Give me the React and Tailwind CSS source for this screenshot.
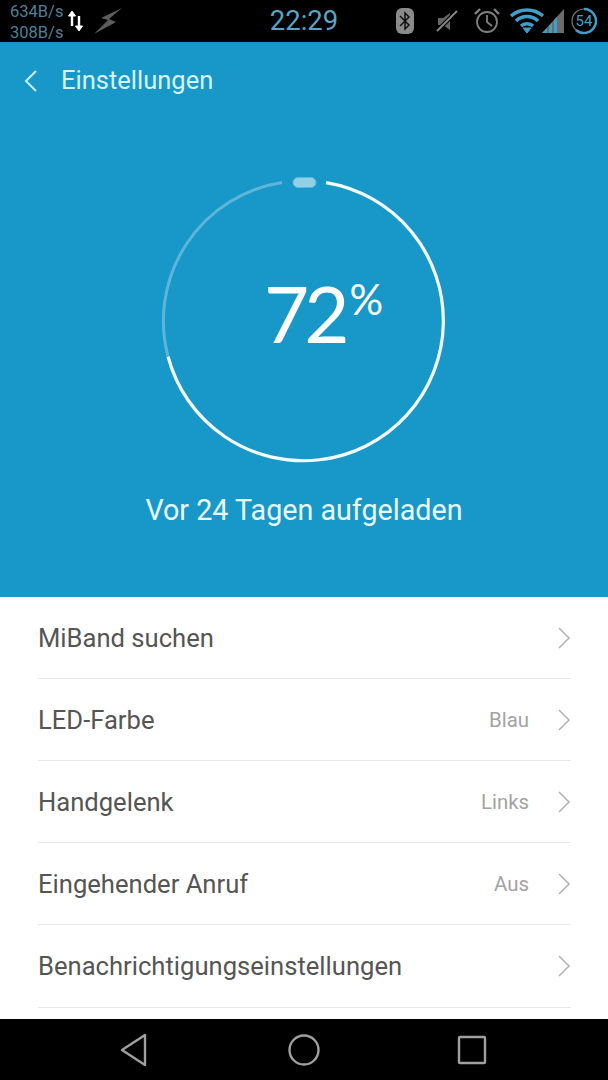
import React from "react";

const rows = [
  { label: "MiBand suchen" },
  { label: "LED-Farbe", value: "Blau" },
  { label: "Handgelenk", value: "Links" },
  { label: "Eingehender Anruf", value: "Aus" },
  { label: "Benachrichtigungseinstellungen" },
];

const Chevron = () => (
  <svg width="14" height="24" viewBox="0 0 14 24" fill="none" stroke="#b4b4b4" strokeWidth="1.6">
    <path d="M2 2 L12 12 L2 22" />
  </svg>
);

const StatusBar = () => (
  <div className="h-[42px] bg-black flex items-center shrink-0 relative">
    <div className="w-[66px] pl-[10px] pt-[2px] text-[16.5px] leading-[21px] text-[#4d8197]">
      <div>634B/s</div>
      <div>308B/s</div>
    </div>
    <svg width="18" height="24" viewBox="0 0 18 24" className="ml-[1px] mt-[-2px]" fill="none" stroke="#fff" strokeWidth="2.4">
      <path d="M5 18 V5" />
      <path d="M1.5 8 L5 3 L8.5 8 Z" fill="#fff" strokeWidth="1" />
      <path d="M12 8 V21" />
      <path d="M8.5 18 L12 23 L15.5 18 Z" fill="#fff" strokeWidth="1" />
    </svg>
    <svg width="30" height="28" viewBox="0 0 30 28" className="ml-[8px]">
      <path d="M29 1 L8 11 L15 13 L1 27 L23 15 L16 12 Z" fill="#5c5c5c" />
    </svg>
    <div className="ml-[145px] w-[72px] text-[27.5px] text-[#57a5c8] text-center leading-none">22:29</div>
    <svg width="20" height="26" viewBox="0 0 20 26" className="ml-[55px]" fill="none">
      <rect x="1" y="0" width="18" height="26" rx="6" fill="#8a8a8a" />
      <path d="M5 8 L14 17 L10 21 V5 L14 9 L5 18" stroke="#111" strokeWidth="1.5" />
    </svg>
    <svg width="24" height="26" viewBox="0 0 24 26" className="ml-[20px]" fill="none">
      <path d="M3 10 H8 L15 5 V22 L8 17 H3 Z" fill="#666" />
      <path d="M2 23 L22 3" stroke="#000" strokeWidth="4" />
      <path d="M2 23 L22 3" stroke="#8a8a8a" strokeWidth="1.8" />
    </svg>
    <svg width="28" height="28" viewBox="0 0 28 28" className="ml-[14px]" fill="none" stroke="#808080" strokeWidth="1.8">
      <circle cx="14" cy="15" r="10" />
      <path d="M14 8 V15 L19 19" />
      <path d="M2 7 L7 2 M26 7 L21 2" strokeWidth="2.4" />
    </svg>
    <svg width="36" height="26" viewBox="0 0 36 26" className="ml-[8px]" fill="none" stroke="#3f9fc9" strokeWidth="3.4">
      <path d="M2 8 C11 0 25 0 34 8" />
      <path d="M7 13 C13 7 23 7 29 13" />
      <path d="M12 18 C15 15 21 15 24 18" />
      <path d="M14 20 L18 25 L22 20 Z" fill="#3f9fc9" strokeWidth="1" />
    </svg>
    <svg width="24" height="26" viewBox="0 0 24 26" className="ml-[-4px]">
      <path d="M1 25 L23 1 V25 Z" fill="#6c6c6c" />
      <path d="M1 25 L6 20 V25 Z M8 25 V17.5 L11 14.5 V25 Z M13 25 V12 L16 9 V25 Z" fill="#3f9fc9" />
    </svg>
    <svg width="28" height="28" viewBox="0 0 28 28" className="ml-[5px]" fill="none">
      <circle cx="14" cy="14" r="12" stroke="#777" strokeWidth="1.2" />
      <path d="M14 2 A12 12 0 1 1 6 23" stroke="#3f9fc9" strokeWidth="2.4" />
      <text x="14" y="19" textAnchor="middle" fontSize="15" fill="#3f9fc9" fontFamily="Roboto, sans-serif">54</text>
    </svg>
  </div>
);

const BatteryRing = () => (
  <div className="relative w-[290px] h-[290px] mx-auto mt-[81px]">
    <svg width="290" height="290" viewBox="0 0 290 290" fill="none">
      <path d="M 167 5.6 A 140 140 0 1 1 9 179.5" stroke="#f3fbfd" strokeWidth="3.2" />
      <path d="M 9 179.5 A 140 140 0 0 1 123 5.6" stroke="#5db6da" strokeWidth="3" />
      <rect x="134" y="0.5" width="23" height="10" rx="5" fill="#93d0e8" stroke="#5db6da" strokeWidth="1" />
    </svg>
    <div className="absolute left-[105px] top-[97px] flex items-start text-white font-['Lato',sans-serif]">
      <span className="text-[78px] leading-[78px] tracking-[-5px]">72</span>
      <span className="text-[42px] leading-[42px] mt-[4px] ml-[5px]">%</span>
    </div>
  </div>
);

const App = () => {
  return (
    <div className="w-[608px] h-[1080px] flex flex-col overflow-hidden bg-white font-['Roboto',sans-serif]">
      <StatusBar />

      {/* blue header */}
      <div className="h-[555px] bg-[#1898c8] shrink-0 flex flex-col">
        <div className="flex items-center pt-[24px] pl-[24px] h-[54px]">
          <svg width="14" height="24" viewBox="0 0 14 24" fill="none" stroke="#c8eef8" strokeWidth="2">
            <path d="M12 2 L2 12 L12 22" />
          </svg>
          <span className="ml-[23px] text-[25.5px] leading-none text-[#d3f4fb]">Einstellungen</span>
        </div>
        <BatteryRing />
        <div className="text-center text-[28.7px] leading-[32px] text-[#e9f8fc] mt-[27px]">Vor 24 Tagen aufgeladen</div>
      </div>

      {/* settings list */}
      <div className="flex-1 pl-[38px] pr-[37px]">
        {rows.map((row) => (
          <div key={row.label} className="h-[82px] last:h-[83px] pt-[1px] last:pt-0 flex items-center border-b border-[#e8e8e8]">
            <span className="text-[25.6px] text-[#555555]">{row.label}</span>
            {row.value && <span className="ml-auto text-[20.4px] text-[#a3a3a3] mr-[28px]">{row.value}</span>}
            <span className={row.value ? "" : "ml-auto"}>
              <Chevron />
            </span>
          </div>
        ))}
      </div>

      {/* nav bar */}
      <div className="h-[61px] bg-black shrink-0 flex items-center">
        <svg width="30" height="34" viewBox="0 0 30 34" className="ml-[119px]" fill="none" stroke="#a0a0a0" strokeWidth="2.4" strokeLinejoin="round">
          <path d="M26 2 V32 L3 17 Z" />
        </svg>
        <svg width="34" height="34" viewBox="0 0 34 34" className="ml-[138px]" fill="none" stroke="#a0a0a0" strokeWidth="2.4">
          <circle cx="17" cy="17" r="14.5" />
        </svg>
        <svg width="30" height="30" viewBox="0 0 30 30" className="ml-[136px]" fill="none" stroke="#a0a0a0" strokeWidth="2.4">
          <rect x="2" y="2" width="26" height="26" rx="1" />
        </svg>
      </div>
    </div>
  );
};

export default App;
